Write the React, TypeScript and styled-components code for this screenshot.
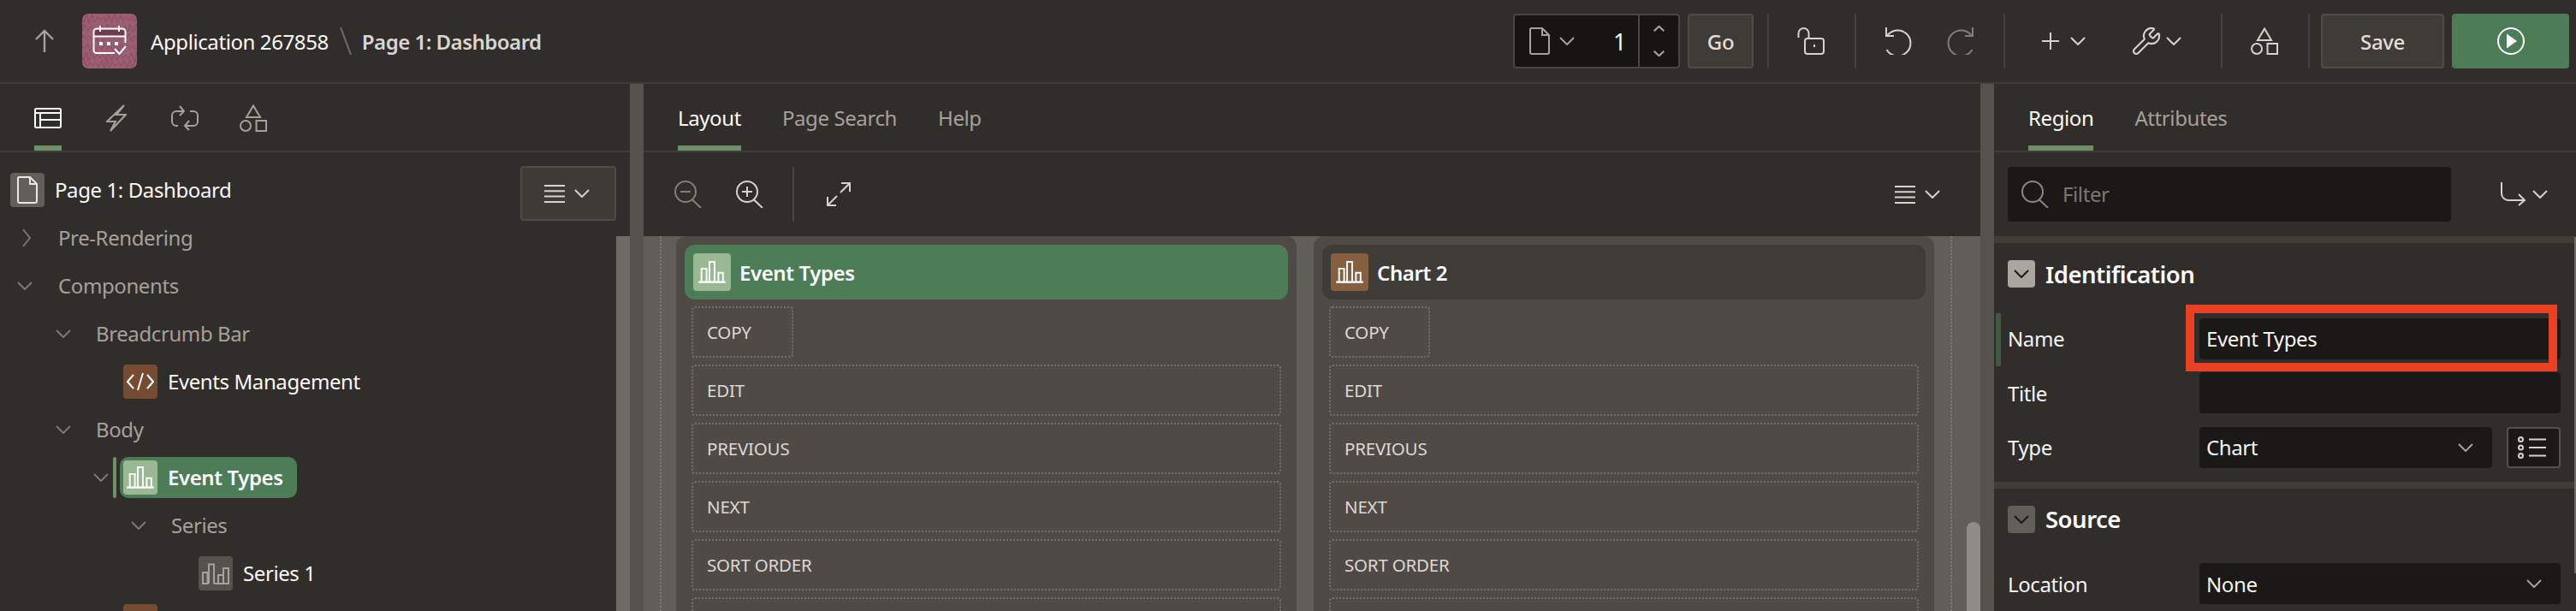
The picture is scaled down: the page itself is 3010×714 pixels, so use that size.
import React from "react";
import styled, { createGlobalStyle } from "styled-components";
import { Wrench } from "lucide-react";

const Global = createGlobalStyle`
  html, body { margin: 0; padding: 0; background: #312d2a; }
  * { box-sizing: border-box; }
`;

const App0 = styled.div`
  width: 3010px; height: 714px; overflow: hidden; display: flex; flex-direction: column;
  background: #312d2a; color: #f7f6f4;
  font-family: "Noto Sans", "Open Sans", sans-serif; font-size: 24px; letter-spacing: -0.4px;
`;
const TopBar = styled.header`
  flex: none; height: 98px; display: flex; align-items: center;
  border-bottom: 2px solid #403d39; padding-bottom: 0;
`;
const Ico = styled.svg<{ $ml?: number; $c?: string; $sw?: number; $flip?: boolean }>`
  flex: none; display: block; fill: none; stroke: currentColor;
  stroke-width: ${(p) => p.$sw ?? 2}; margin-left: ${(p) => p.$ml ?? 0}px; color: ${(p) => p.$c ?? "#d6d3cf"};
  ${(p) => p.$flip && "transform: scaleY(-1);"}
`;
const Logo = styled.div`
  flex: none; width: 64px; height: 64px; margin-left: 32px; border-radius: 7px; overflow: hidden; background: #9d5f72;
`;
const AppName = styled.span`margin-left: 16px; white-space: nowrap; color: #fbfaf9;`;
const Crumb = styled.span`margin-left: 12px; font-weight: 600; letter-spacing: -0.5px; white-space: nowrap; color: #d9d6d2;`;
const ToolGroup = styled.div`margin-left: auto; padding-right: 8px; display: flex; align-items: center; height: 64px;`;
const PageFinder = styled.div`
  width: 195px; height: 64px; display: flex; align-items: center; background: #161513;
  border: 2px solid #4a4743; border-radius: 4px;
`;
const PageNum = styled.span`flex: 1; text-align: right; padding-right: 14px; font-size: 27px; color: #f7f6f4;`;
const Spinner = styled.div`
  flex: none; width: 47px; height: 100%; border-left: 2px solid #4a4743; display: flex; flex-direction: column;
  align-items: center; justify-content: space-between; padding: 12px 0;
`;
const ToolButton = styled.div<{ $ml: number; $w: number }>`
  flex: none; height: 64px; width: ${(p) => p.$w}px; margin-left: ${(p) => p.$ml}px; display: flex; align-items: center; justify-content: center;
  background: #3f3c38; border: 2px solid #4f4c48; border-radius: 4px; font-weight: 500; color: #e2dfdb;
`;
const ToolDivider = styled.div<{ $ml: number }>`flex: none; width: 2px; height: 64px; background: #46433f; margin-left: ${(p) => p.$ml}px;`;
const RunButton = styled.div`
  flex: none; width: 137px; height: 64px; margin-left: 9px; background: #4c7d57; border-radius: 4px;
  display: flex; align-items: center; justify-content: center;
`;

const Main = styled.div`flex: 1; display: flex; min-height: 0;`;
const LeftPanel = styled.aside`flex: none; width: 736px; display: flex; flex-direction: column;`;
const Splitter = styled.div`flex: none; width: 16px; background: #55514d;`;
const CenterPanel = styled.main`flex: 1; min-width: 0; display: flex; flex-direction: column;`;
const RightPanel = styled.aside`flex: none; width: 680px; position: relative; display: flex; flex-direction: column;`;
const TabBar = styled.div`
  flex: none; height: 80px; border-bottom: 2px solid #403d39; padding-left: 40px; display: flex; gap: 48px; align-items: stretch;
`;
const Tab = styled.div<{ $active?: boolean }>`
  display: flex; align-items: center; padding-top: 6px; position: relative; white-space: nowrap;
  color: ${(p) => (p.$active ? "#fbfaf9" : "#a5a19c")};
  border-bottom: 6px solid ${(p) => (p.$active ? "#6e8f68" : "transparent")};
`;
const IconTab = styled.div<{ $active?: boolean; $w: number }>`
  width: 32px; display: flex; justify-content: center; padding-top: 28px; margin-right: ${(p) => p.$w}px;
  border-bottom: 6px solid ${(p) => (p.$active ? "#6e8f68" : "transparent")};
`;
const IconTabBar = styled(TabBar)`gap: 0; padding-right: 16px;`;
const Lifted = styled.div<{ $by: number }>`margin-top: -${(p) => p.$by}px;`;

const TreeWrap = styled.div`flex: 1; display: flex; min-height: 0;`;
const Tree = styled.div`flex: 1; min-width: 0; padding-top: 16px; position: relative; overflow: hidden;`;
const TreeThumb = styled.div`flex: none; width: 16px; margin-top: 98px; background: #6f6b67;`;
const MenuButton = styled.div`
  position: absolute; top: 16px; right: 0; width: 112px; height: 64px; border: 2px solid #4f4c48; border-radius: 4px; background: #3e3b37;
  display: flex; align-items: center; padding-left: 26px; gap: 11px;
`;
const Row = styled.div<{ $pl: number }>`
  display: flex; align-items: center; height: 56px; padding-left: ${(p) => p.$pl}px; white-space: nowrap;
`;
const Group = styled.span<{ $ml: number }>`margin-left: ${(p) => p.$ml}px; color: #a5a19c; padding-bottom: 2px;`;
const NodeIcon = styled.span<{ $bg: string }>`
  flex: none; width: 40px; height: 40px; border-radius: 4px; background: ${(p) => p.$bg}; color: #fff;
  display: flex; align-items: center; justify-content: center;
`;
const NodeText = styled.span`margin-left: 12px; color: #fbfaf9; padding-bottom: 2px;`;
const SelBar = styled.span`flex: none; width: 4px; height: 48px; margin-left: 5px; background: #6e8f68; border-radius: 2px;`;
const SelPill = styled.span`
  display: flex; align-items: center; height: 48px; margin-left: 4px; padding: 0 16px 0 4px; border-radius: 10px; background: #4c7d57; font-weight: 600;
`;

const CanvasTools = styled.div`
  flex: none; height: 98px; display: flex; align-items: center; padding: 0 47px 0 36px;
`;
const VRule = styled.div`flex: none; width: 2px; height: 64px; background: #4a4743; margin-left: 34px;`;
const Push = styled.div`margin-left: auto; display: flex; align-items: center; gap: 11px;`;
const Canvas = styled.div`flex: 1; min-height: 0; display: flex; background: #615d59; padding-left: 19px; overflow: hidden;`;
const DropZone = styled.div`
  flex: 1; min-width: 0; display: grid; grid-template-columns: 1fr 1fr; column-gap: 20px; padding: 0 19px 0 17px;
  border-left: 2px dotted #7d7975; border-right: 2px dotted #7d7975;
`;
const CanvasThumbCol = styled.div`flex: none; width: 33px; display: flex; justify-content: flex-end;`;
const CanvasThumb = styled.div`width: 16px; margin-top: 334px; height: 200px; border-radius: 8px 8px 0 0; background: #918c88;`;
const Column = styled.div`background: #4f4a46; border-radius: 12px 12px 0 0; padding: 10px; display: flex; flex-direction: column;`;
const RegionHead = styled.div<{ $sel?: boolean }>`
  flex: none; height: 64px; border-radius: 12px; display: flex; align-items: center; padding-left: 10px;
  background: ${(p) => (p.$sel ? "#4c7d57" : "#3f3c37")}; font-weight: 600; color: #fff;
`;
const RegionIcon = styled.span<{ $bg: string }>`
  flex: none; width: 44px; height: 44px; border-radius: 4px; background: ${(p) => p.$bg}; margin-right: 10px;
  display: flex; align-items: center; justify-content: center; color: #fff;
`;
const Slots = styled.div`display: flex; flex-direction: column; gap: 8px; padding: 8px 8px 0; align-items: stretch;`;
const SlotBox = styled.div<{ $w?: number }>`
  flex: none; height: 60px; display: flex; align-items: center; padding-left: 16px; border: 2px dotted #736f6b; border-radius: 4px;
  font-size: 20.5px; letter-spacing: -0.2px; color: #dcd9d5; width: ${(p) => (p.$w ? `${p.$w}px` : "auto")};
`;

const FilterBar = styled.div`flex: none; height: 98px; display: flex; align-items: center; padding-left: 16px;`;
const FilterBox = styled.div`
  flex: none; width: 518px; height: 64px; background: #1a1917; border-radius: 4px; display: flex; align-items: center; padding-left: 16px;
  color: #7b7773;
`;
const FilterText = styled.span`margin-left: 16px; padding-bottom: 2px;`;
const SectionRule = styled.div<{ $mt?: number }>`flex: none; height: 8px; background: #403d39; margin-top: ${(p) => p.$mt ?? 0}px;`;
const SectionHead = styled.div`
  display: flex; align-items: center; height: 32px; margin: 20px 0 28px 16px; font-size: 27.5px; letter-spacing: -0.5px; font-weight: 600; color: #fbfaf9;
`;
const SectionToggle = styled.span<{ $bg: string }>`
  flex: none; width: 32px; height: 32px; margin-right: 12px; border-radius: 4px; background: ${(p) => p.$bg};
  display: flex; align-items: center; justify-content: center;
`;
const PropRow = styled.div<{ $active?: boolean }>`
  display: flex; align-items: center; height: 64px; padding-left: 16px; position: relative;
  ${(p) => p.$active && `&::before { content: ""; position: absolute; left: 2px; top: 2px; width: 6px; height: 62px; background: #3f5a41; }`}
`;
const PropLabel = styled.span`flex: none; width: 224px; color: #f5f4f2;`;
const Field = styled.div<{ $w: number }>`
  flex: none; width: ${(p) => p.$w}px; height: 48px; border-radius: 4px; background: #1a1917; position: relative;
  display: flex; align-items: center; justify-content: space-between; padding: 0 22px 0 8px; color: #f5f4f2;
`;
const Highlight = styled.div`
  position: absolute; left: -16px; right: 4px; top: -16px; bottom: -14px; border: 10px solid #ea4024;
`;
const LovButton = styled.div`
  flex: none; width: 63px; height: 48px; margin-left: 17px; background: #1a1917; border: 2px solid #55514d; border-radius: 4px;
  display: flex; align-items: center; justify-content: center;
`;
const EdgeBar = styled.div`position: absolute; right: 0; top: 179px; width: 2px; height: 393px; background: #6f6b67;`;

const Chev = ({ ml, c, w = 18, h = 10, sw = 2, flip }: { ml?: number; c?: string; w?: number; h?: number; sw?: number; flip?: boolean }) => (
  <Ico width={w} height={h} viewBox="0 0 18 10" preserveAspectRatio="none" $ml={ml} $c={c} $sw={sw} $flip={flip}><path d="M1 1 L9 9 L17 1" /></Ico>
);
const Shapes = ({ ml, c }: { ml?: number; c?: string }) => (
  <Ico width={32} height={32} viewBox="0 0 32 32" $ml={ml} $c={c}>
    <path d="M16 1.5 L24 15 H8 Z" /><circle cx="7" cy="25" r="6" /><rect x="19.5" y="19" width="11.5" height="12" />
  </Ico>
);
const PageGlyph = ({ ml, c, w = 24, h = 32 }: { ml?: number; c?: string; w?: number; h?: number }) => (
  <Ico width={w} height={h} viewBox="0 0 24 32" $ml={ml} $c={c}>
    <path d="M2 1 H15 L23 9 V29 a2 2 0 0 1 -2 2 H3 a2 2 0 0 1 -2 -2 V2 Z" /><path d="M15 1 V9 H23" />
  </Ico>
);
const ChartGlyph = ({ w = 32 }: { w?: number }) => (
  <Ico width={w} height={w * 0.8} viewBox="0 0 32 26" $c="#fff">
    <path d="M0 25 H32" strokeWidth="2.4" /><path d="M3.5 24 V9 H9.5 V24" /><path d="M13 24 V1 H19 V24" /><path d="M23.5 24 V14 H29 V24" />
  </Ico>
);
const SeriesGlyph = () => (
  <Ico width={32} height={25} viewBox="0 0 32 25" $c="#a5a19c">
    <path d="M1 24 V11 H6.5 V24 Z" /><path d="M8 24 V1.5 H14 V24" /><path d="M14 24 H31 V6 H25 V24" /><path d="M19 24 V14 H25" />
  </Ico>
);
const Hamburger = () => (
  <Ico width={24} height={21} viewBox="0 0 24 21" $c="#d6d3cf"><path d="M0 1 H24 M0 7.3 H24 M0 13.6 H24 M0 20 H24" /></Ico>
);
const Search = ({ c = "#8a8682", ml }: { c?: string; ml?: number }) => (
  <Ico width={32} height={32} viewBox="0 0 32 32" $c={c} $ml={ml}><circle cx="13" cy="13" r="12" /><path d="M20.5 22 L31 32" /></Ico>
);
const StyledWrench = styled(Wrench)`flex: none; margin-left: 53px; color: #d6d3cf;`;

const wave = (y: number, amp: number, seed: number) => {
  let d = `M0 ${y}`;
  for (let x = 1; x <= 64; x++) {
    const v = Math.sin(x * 0.95 + seed) * amp * (0.65 + 0.35 * Math.sin(x * 0.21 + seed));
    d += ` L${x} ${(y + v).toFixed(1)}`;
  }
  return d;
};

const LogoArt = () => (
  <svg width="64" height="64" viewBox="0 0 64 64" fill="none" display="block">
    <g stroke="#874a5d" strokeWidth="1" opacity="0.85">
      {[6, 17, 28, 39, 50, 59].map((y, i) => <path key={y} d={wave(y, 5.5, i * 1.7)} />)}
    </g>
    <path d="M14 19 H50 V26 H14 Z" fill="#6f3a4c" />
    <g stroke="#fff" strokeWidth="2">
      <path d="M38 46 H17 a3.5 3.5 0 0 1 -3.5 -3.5 V21 a3.5 3.5 0 0 1 3.5 -3.5 H47 a3.5 3.5 0 0 1 3.5 3.5 V34" />
      <path d="M14 26.5 H50" /><path d="M21 14 V21 M43 14 V21" />
      <path d="M38 41 L43.5 47 L51 38" />
    </g>
    <g fill="#fff"><rect x="20" y="33" width="4" height="4" /><rect x="29" y="33" width="4" height="4" /><rect x="38" y="33" width="4" height="4" /></g>
  </svg>
);

const CHIPS = ["COPY", "EDIT", "PREVIOUS", "NEXT", "SORT ORDER", ""];

const Region = ({ name, sel, bg, copyW }: { name: string; sel?: boolean; bg: string; copyW: number }) => (
  <Column>
    <RegionHead $sel={sel}>
      <RegionIcon $bg={bg}><ChartGlyph /></RegionIcon>
      {name}
    </RegionHead>
    <Slots>
      {CHIPS.map((c, i) => <SlotBox key={i} $w={i === 0 ? copyW : undefined}>{c}</SlotBox>)}
    </Slots>
  </Column>
);

export default function App() {
  return (
    <App0>
      <Global />
      <TopBar>
        <Ico width={24} height={28} viewBox="0 0 24 28" $ml={40} $c="#a5a19c" $sw={2.4}><path d="M12 27 V2 M2 12 L12 2 L22 12" /></Ico>
        <Logo><LogoArt /></Logo>
        <AppName>Application 267858</AppName>
        <Ico width={14} height={32} viewBox="0 0 14 32" $ml={13} $c="#6f6b67"><path d="M1 0 L13 32" /></Ico>
        <Crumb>Page 1: Dashboard</Crumb>
        <ToolGroup>
          <PageFinder>
            <PageGlyph ml={17} c="#a5a19c" />
            <Chev ml={11} c="#a5a19c" />
            <PageNum>1</PageNum>
            <Spinner>
              <Chev w={13} h={7} c="#a5a19c" sw={3} flip />
              <Chev w={13} h={7} c="#a5a19c" sw={3} />
            </Spinner>
          </PageFinder>
          <ToolButton $ml={9} $w={77}>Go</ToolButton>
          <ToolDivider $ml={16} />
          <Ico width={32} height={32} viewBox="0 0 32 32" $ml={33}>
            <path d="M1.5 12 V7 a6 6 0 0 1 12 0 v5" /><rect x="9" y="13" width="22" height="18" rx="3" /><path d="M20 20 V23" />
          </Ico>
          <ToolDivider $ml={35} />
          <Ico width={32} height={32} viewBox="0 0 32 32" $ml={34}><path d="M1 0 V10 H10" /><path d="M2 10 A15 15 0 1 1 1.5 26" /></Ico>
          <Ico width={32} height={32} viewBox="0 0 32 32" $ml={39} $c="#827e7a"><path d="M31 0 V10 H22" /><path d="M30 10 A15 15 0 1 0 30.5 26" /></Ico>
          <ToolDivider $ml={35} />
          <Ico width={20} height={20} viewBox="0 0 20 20" $ml={43}><path d="M10 0 V20 M0 10 H20" /></Ico>
          <Chev ml={13} />
          <StyledWrench size={36} strokeWidth={1.4} />
          <Chev ml={5} />
          <ToolDivider $ml={46} />
          <Shapes ml={33} />
          <ToolDivider $ml={35} />
          <ToolButton $ml={13} $w={144}>Save</ToolButton>
          <RunButton>
            <Ico width={32} height={32} viewBox="0 0 32 32" $c="#fff"><circle cx="16" cy="16" r="15" /><path d="M11 7.5 L23 16 L11 24.5 Z" fill="#fff" stroke="none" /></Ico>
          </RunButton>
        </ToolGroup>
      </TopBar>
      <Main>
        <LeftPanel>
          <IconTabBar>
            <IconTab $active $w={48}>
              <Ico width={32} height={24} viewBox="0 0 32 24" $c="#fff"><rect x="1" y="1" width="30" height="22" rx="1.5" /><path d="M1 6 H31 M7 6 V23 M7 14 H31" /></Ico>
            </IconTab>
            <IconTab $w={48}>
              <Lifted $by={4}>
                <Ico width={24} height={32} viewBox="0 0 24 32" $c="#a5a19c"><path d="M21 1 L1 20 H11 L5 31 L23 12 H12 Z" /></Ico>
              </Lifted>
            </IconTab>
            <IconTab $w={48}>
              <Lifted $by={3}>
                <Ico width={32} height={30} viewBox="0 0 32 30" $c="#a5a19c">
                  <path d="M14 7 H6 a5 5 0 0 0 -5 5 v7 a5 5 0 0 0 5 5 h2" /><path d="M10 1 L15 7 L10 12" />
                  <path d="M22 7 h4 a5 5 0 0 1 5 5 v7 a5 5 0 0 1 -5 5 H17" /><path d="M21 18 L16 24 L21 29" />
                </Ico>
              </Lifted>
            </IconTab>
            <IconTab $w={0}>
              <Lifted $by={4}><Shapes c="#a5a19c" /></Lifted>
            </IconTab>
          </IconTabBar>
          <TreeWrap>
            <Tree>
              <MenuButton><Hamburger /><Chev /></MenuButton>
              <Row $pl={12}>
                <NodeIcon $bg="#625e5a"><PageGlyph c="#e8e6e3" /></NodeIcon>
                <NodeText>Page 1: Dashboard</NodeText>
              </Row>
              <Row $pl={26}>
                <Ico width={10} height={22} viewBox="0 0 10 22" $c="#7d7975"><path d="M1 1 L9 11 L1 21" /></Ico>
                <Group $ml={32}>Pre-Rendering</Group>
              </Row>
              <Row $pl={20}><Chev c="#7d7975" /><Group $ml={30}>Components</Group></Row>
              <Row $pl={65}><Chev c="#7d7975" /><Group $ml={29}>Breadcrumb Bar</Group></Row>
              <Row $pl={144}>
                <NodeIcon $bg="#754c32">
                  <Ico width={32} height={22} viewBox="0 0 32 22" $c="#fff"><path d="M8 3 L1 11 L8 19 M24 3 L31 11 L24 19 M19 1 L13 21" /></Ico>
                </NodeIcon>
                <NodeText>Events Management</NodeText>
              </Row>
              <Row $pl={65}><Chev c="#7d7975" /><Group $ml={29}>Body</Group></Row>
              <Row $pl={109}>
                <Chev c="#7d7975" />
                <SelBar />
                <SelPill>
                  <NodeIcon $bg="#9ab893"><ChartGlyph /></NodeIcon>
                  <NodeText>Event Types</NodeText>
                </SelPill>
              </Row>
              <Row $pl={153}><Chev c="#7d7975" /><Group $ml={29}>Series</Group></Row>
              <Row $pl={232}>
                <NodeIcon $bg="#55514d"><SeriesGlyph /></NodeIcon>
                <NodeText>Series 1</NodeText>
              </Row>
              <Row $pl={144}><NodeIcon $bg="#754c32" /></Row>
            </Tree>
            <TreeThumb />
          </TreeWrap>
        </LeftPanel>
        <Splitter />
        <CenterPanel>
          <TabBar>
            <Tab $active>Layout</Tab>
            <Tab>Page Search</Tab>
            <Tab>Help</Tab>
          </TabBar>
          <CanvasTools>
            <Ico width={32} height={32} viewBox="0 0 32 32" $c="#827e7a"><circle cx="13" cy="13" r="12" /><path d="M20.5 22 L31 32 M7 13 H19" /></Ico>
            <Ico width={32} height={32} viewBox="0 0 32 32" $ml={40}><circle cx="13" cy="13" r="12" /><path d="M20.5 22 L31 32 M7 13 H19 M13 7 V19" /></Ico>
            <VRule />
            <Ico width={28} height={28} viewBox="0 0 28 28" $ml={38}><path d="M16 12 L27 1 M17 1 H27 V11 M12 16 L1 27 M1 17 V27 H11" /></Ico>
            <Push><Hamburger /><Chev /></Push>
          </CanvasTools>
          <Canvas>
            <DropZone>
              <Region name="Event Types" sel bg="#9ab893" copyW={119} />
              <Region name="Chart 2" bg="#865e40" copyW={118} />
            </DropZone>
            <CanvasThumbCol><CanvasThumb /></CanvasThumbCol>
          </Canvas>
        </CenterPanel>
        <Splitter />
        <RightPanel>
          <TabBar>
            <Tab $active>Region</Tab>
            <Tab>Attributes</Tab>
          </TabBar>
          <FilterBar>
            <FilterBox><Search /><FilterText>Filter</FilterText></FilterBox>
            <Ico width={30} height={28} viewBox="0 0 30 28" $ml={58}><path d="M1 0 V13 a8 8 0 0 0 8 8 H28 M21 14 L28 21 L21 27" /></Ico>
            <Chev ml={7} />
          </FilterBar>
          <SectionRule />
          <SectionHead><SectionToggle $bg="#aaa59f"><Chev c="#1a1917" /></SectionToggle>Identification</SectionHead>
          <PropRow $active>
            <PropLabel>Name</PropLabel>
            <Field $w={422}>Event Types<Highlight /></Field>
          </PropRow>
          <PropRow><PropLabel>Title</PropLabel><Field $w={422} /></PropRow>
          <PropRow>
            <PropLabel>Type</PropLabel>
            <Field $w={342}>Chart<Chev c="#a5a19c" /></Field>
            <LovButton>
              <Ico width={40} height={26} viewBox="0 0 40 26" $c="#d6d3cf">
                <circle cx="4.5" cy="3.5" r="2.5" /><circle cx="4.5" cy="13" r="2.5" /><circle cx="4.5" cy="22.5" r="2.5" />
                <path d="M14 3.5 H34 M14 13 H34 M14 22.5 H34" />
              </Ico>
            </LovButton>
          </PropRow>
          <SectionRule $mt={8} />
          <SectionHead><SectionToggle $bg="#625e5a"><Chev c="#1a1917" /></SectionToggle>Source</SectionHead>
          <PropRow><PropLabel>Location</PropLabel><Field $w={422}>None<Chev c="#a5a19c" /></Field></PropRow>
          <EdgeBar />
        </RightPanel>
      </Main>
    </App0>
  );
}
